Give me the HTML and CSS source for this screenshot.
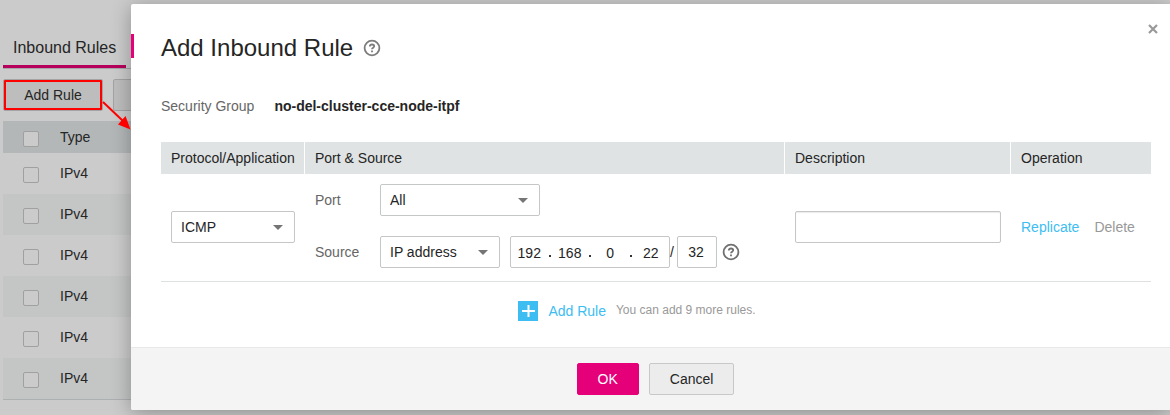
FILE: index.html
```html
<!DOCTYPE html>
<html lang="en">
<head>
<meta charset="utf-8">
<title>Add Inbound Rule</title>
<link rel="stylesheet" href="styles.css">
</head>
<body>
<main class="page">
  <nav class="tabs"><a class="tab" href="#inbound">Inbound Rules</a></nav>
  <div class="toolbar">
    <button class="tool marked" type="button">Add Rule</button>
    <button class="tool" type="button" aria-label="More"></button>
  </div>
  <table class="list">
    <thead><tr><th class="pick"><input type="checkbox" aria-label="Select all"></th><th>Type</th></tr></thead>
    <tbody>
      <tr><td class="pick"><input type="checkbox" aria-label="Select rule 1"></td><td>IPv4</td></tr>
      <tr><td class="pick"><input type="checkbox" aria-label="Select rule 2"></td><td>IPv4</td></tr>
      <tr><td class="pick"><input type="checkbox" aria-label="Select rule 3"></td><td>IPv4</td></tr>
      <tr><td class="pick"><input type="checkbox" aria-label="Select rule 4"></td><td>IPv4</td></tr>
      <tr><td class="pick"><input type="checkbox" aria-label="Select rule 5"></td><td>IPv4</td></tr>
      <tr><td class="pick"><input type="checkbox" aria-label="Select rule 6"></td><td>IPv4</td></tr>
    </tbody>
  </table>
</main>

<section class="dialog" role="dialog" aria-labelledby="title">
  <header class="head">
    <h1 id="title">Add Inbound Rule</h1>
    <svg class="help" viewBox="0 0 18 18" aria-hidden="true"><circle cx="9" cy="9" r="7.4"/><path d="M6.8 7.5C6.8 6.2 7.7 5.5 9 5.5s2.2.7 2.2 1.8c0 1.4-2.2 1.5-2.2 3M9 11.4v1.8"/></svg>
    <button class="close" type="button" aria-label="Close"><svg viewBox="0 0 10 10"><path d="M1 1l8 8M9 1L1 9"/></svg></button>
  </header>
  <div class="body">
    <dl class="group"><dt>Security Group</dt><dd>no-del-cluster-cce-node-itpf</dd></dl>
    <table class="rules">
      <thead><tr><th class="c-proto">Protocol/Application</th><th>Port &amp; Source</th><th class="c-desc">Description</th><th class="c-op">Operation</th></tr></thead>
      <tbody><tr>
        <td><span class="select"><select aria-label="Protocol"><option>ICMP</option></select><svg class="caret" viewBox="0 0 10 5"><path d="M0 0h10L5 5z"/></svg></span></td>
        <td>
          <div class="fields">
            <div class="field">
              <label for="port">Port</label>
              <span class="select wide"><select id="port"><option>All</option></select><svg class="caret" viewBox="0 0 10 5"><path d="M0 0h10L5 5z"/></svg></span>
            </div>
            <div class="field">
              <label for="source">Source</label>
              <span class="select mid"><select id="source"><option>IP address</option></select><svg class="caret" viewBox="0 0 10 5"><path d="M0 0h10L5 5z"/></svg></span>
              <span class="ip"><input value="192" aria-label="Octet 1"><i></i><input value="168" aria-label="Octet 2"><i></i><input value="0" aria-label="Octet 3"><i></i><input value="22" aria-label="Octet 4"></span>
              <span class="slash">/</span>
              <input class="box mask" value="32" aria-label="Mask">
              <svg class="help dark" viewBox="0 0 18 18" aria-hidden="true"><circle cx="9" cy="9" r="7.4"/><path d="M6.8 7.5C6.8 6.2 7.7 5.5 9 5.5s2.2.7 2.2 1.8c0 1.4-2.2 1.5-2.2 3M9 11.4v1.8"/></svg>
            </div>
          </div>
        </td>
        <td><input class="box desc" aria-label="Description"></td>
        <td><span class="ops"><a href="#replicate">Replicate</a><a class="off" href="#delete">Delete</a></span></td>
      </tr></tbody>
    </table>
    <div class="more">
      <a class="add" href="#add"><svg viewBox="0 0 20 20" aria-hidden="true"><path class="tile" d="M0 0h20v20H0z"/><path class="plus" d="M10.500 4v12M4 10h13"/></svg>Add Rule</a>
      <span class="hint">You can add 9 more rules.</span>
    </div>
  </div>
  <footer class="foot">
    <button class="btn primary" type="button">OK</button>
    <button class="btn" type="button">Cancel</button>
  </footer>
</section>

<svg class="arrow" viewBox="0 0 30 30" aria-hidden="true"><path class="shaft" d="M1 2l20 19"/><path class="tip" d="M28.500 29.500L16 24.500l7.500-8.500z"/></svg>
</body>
</html>
```
FILE: styles.css
```css
* { box-sizing: border-box; }
body {
  position: relative;
  min-height: 100vh;
  margin: 0;
  overflow: hidden;
  background: #cbcbcb;
  color: #252525;
  font: 14px/20px "Liberation Sans", Arial, sans-serif;
}
button, input, select { font: inherit; color: inherit; }
a { text-decoration: none; }

/* Page behind the dialog */
.page { padding: 28px 0 0 3px; }
.tabs { display: flex; border-bottom: 1px solid #a6a6a6; }
.tab {
  padding: 10px 10px 7px;
  border-bottom: 3px solid #b6005c;
  color: #252525;
  font-size: 16px;
}
.toolbar { display: flex; gap: 10px; padding: 10px 0; }
.tool {
  width: 100px;
  height: 32px;
  padding: 0;
  border: 1px solid #a3a3a3;
  border-radius: 2px;
  background: #bdbdbd;
}
.marked { outline: 2px solid #f00; outline-offset: -3px; }
.list { width: 100%; border-collapse: separate; border-spacing: 0; border-bottom: 1px solid #adb0b0; }
.list th, .list td { height: 41px; padding: 0 0 1px; font-weight: normal; text-align: left; }
.list th { height: 32px; padding: 0; background: #b3b7b7; }
.list .pick { width: 57px; padding: 3px 0 0 20px; }
.list tbody tr:nth-child(even) { background: #c4c6c5; }
.pick input {
  display: block;
  width: 16px;
  height: 16px;
  margin: 0;
  appearance: none;
  border: 1px solid #a0a0a0;
  border-radius: 2px;
  background: #cbcbcb;
}

/* Dialog */
.dialog {
  position: absolute;
  top: 4px;
  right: 0;
  left: 131px;
  border-radius: 2px 0 0 2px;
  background: #fff;
  box-shadow: 0 3px 20px rgba(0, 0, 0, .3);
}
.head { display: flex; align-items: center; padding: 30px 12px 0 0; }
.head::before { align-self: flex-start; width: 3px; height: 24px; margin-right: 27px; background: #e5007a; content: ""; }
h1 { margin: 0; font-size: 24px; font-weight: normal; line-height: 28px; }
.help { width: 18px; height: 18px; margin-left: 10px; fill: none; stroke: #7c7c7c; stroke-width: 1.8; }
.help.dark { margin-left: 5px; stroke: #707070; }
.close { align-self: flex-start; height: 10px; margin: -10px 0 0 auto; padding: 0; border: 0; background: none; }
.close svg { display: block; width: 10px; height: 10px; stroke: #999; stroke-width: 2.2; }
.body { padding: 34px 19px 26px 30px; }
.group { display: flex; gap: 20px; margin: 0 0 26px; }
.group dt { color: #666; }
.group dd { margin: 0; font-weight: bold; }
.rules { width: 100%; table-layout: fixed; border-collapse: collapse; border-bottom: 1px solid #dfe1e1; }
.rules th {
  height: 32px;
  padding: 0 0 0 10px;
  background: linear-gradient(#fff, #fff) right / 1px 100% no-repeat #dfe3e3;
  font-weight: normal;
  text-align: left;
}
.rules th:last-child { background: #dfe3e3; }
.rules td { height: 107px; padding: 0 10px; }
.c-proto { width: 144px; }
.c-desc { width: 226px; }
.c-op { width: 140px; }
.select { position: relative; display: block; }
.select.wide { width: 160px; }
.select.mid { width: 120px; margin-right: 10px; }
.select select, .box, .ip {
  width: 100%;
  height: 32px;
  padding: 0 9px;
  border: 1px solid #c5c7c7;
  border-radius: 2px;
  background: #fff;
}
.select select { display: block; appearance: none; }
.caret { position: absolute; top: 14px; right: 12px; width: 10px; height: 5px; fill: #757575; pointer-events: none; }
.fields { display: grid; gap: 20px; padding-bottom: 3px; }
.field { display: flex; align-items: center; }
.field label { width: 65px; color: #666; }
.ip { display: flex; align-items: center; width: 160px; padding: 2px 0 0; }
.ip input { flex: 1; min-width: 0; padding: 0; border: 0; background: none; text-align: center; }
.ip i { width: 2px; height: 2px; margin: 7px 1px 0; background: #333; }
.slash { width: 7px; }
.box.mask { width: 40px; padding: 0 2px 0 0; text-align: center; }
.desc { display: block; box-shadow: inset 0 1px 1px rgba(0, 0, 0, .08); }
.ops { display: flex; gap: 15px; }
.ops a, .add { color: #3dbdf2; }
.ops .off { color: #999; }
.more { display: flex; justify-content: center; gap: 10px; padding: 19px 38px 0 0; }
.add { display: flex; align-items: center; gap: 10px; }
.add svg { width: 20px; height: 20px; }
.tile { fill: #3dbdf2; }
.plus { stroke: #fff; stroke-width: 2; }
.hint { color: #999; font-size: 12px; line-height: 18px; }
.foot {
  display: flex;
  justify-content: center;
  gap: 10px;
  padding: 15px 0 15px 10px;
  border-top: 1px solid #e8e8e8;
  border-radius: 0 0 0 2px;
  background: #f4f4f4;
}
.btn { height: 32px; padding: 0 20px; border: 1px solid #c8c8c8; border-radius: 2px; background: #ececec; }
.btn.primary { border-color: #e5007a; background: #e5007a; color: #fff; }

/* Callout from the button to the dialog */
.arrow { position: absolute; top: 100px; left: 102px; width: 30px; height: 30px; }
.shaft { stroke: #f00; stroke-width: 2; }
.tip { fill: #f00; }
```
